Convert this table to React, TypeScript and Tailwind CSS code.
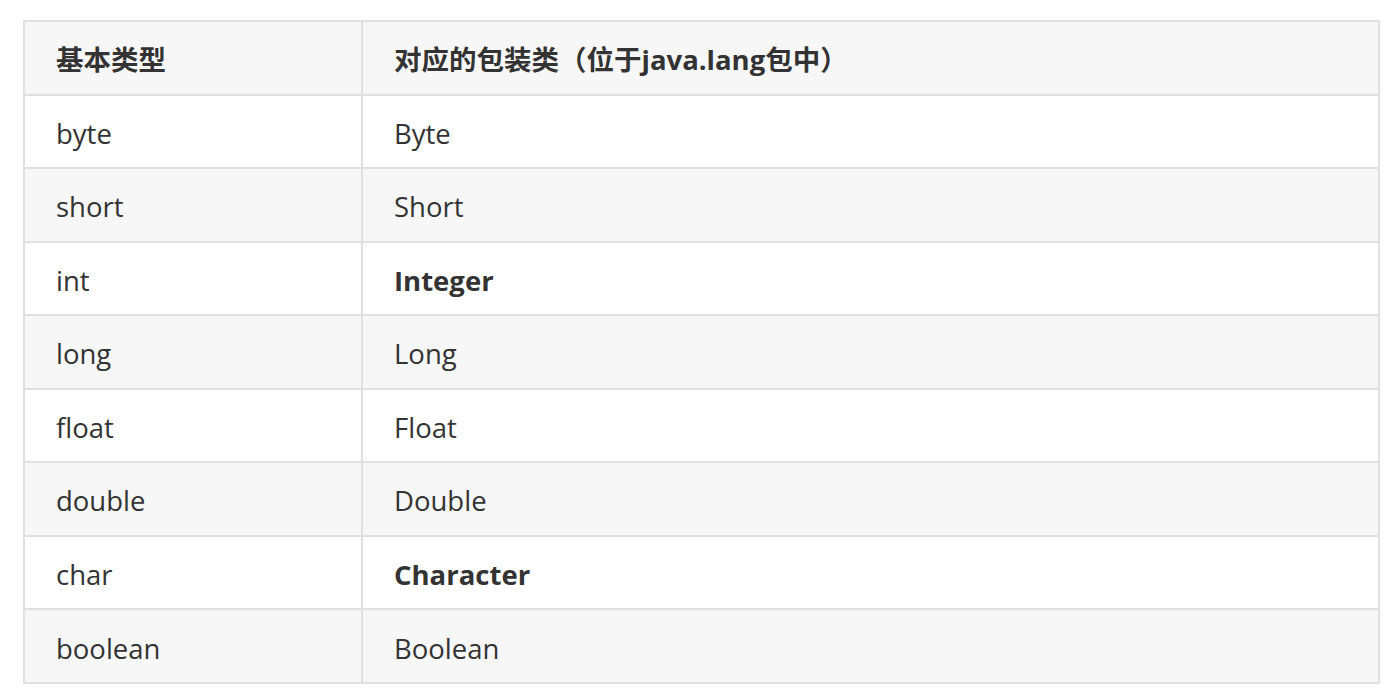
const rows: { basic: string; wrapper: string; bold?: boolean }[] = [
  { basic: "byte", wrapper: "Byte" },
  { basic: "short", wrapper: "Short" },
  { basic: "int", wrapper: "Integer", bold: true },
  { basic: "long", wrapper: "Long" },
  { basic: "float", wrapper: "Float" },
  { basic: "double", wrapper: "Double" },
  { basic: "char", wrapper: "Character", bold: true },
  { basic: "boolean", wrapper: "Boolean" },
];

export default function App() {
  return (
    <div
      className="min-h-screen bg-white pt-[20px] pl-[23px] text-[#333333]"
      style={{ fontFamily: '"Open Sans", "Noto Sans CJK SC", sans-serif' }}
    >
      <div className="w-[1357px] border-2 border-[#e0e0e0]">
        {/* header */}
        <div className="grid grid-cols-[338px_1fr] bg-[#f7f7f7] border-b-2 border-[#e0e0e0]">
          <div className="h-[71.55px] flex items-center pt-[3px] pl-[31px] border-r-2 border-[#e0e0e0] text-[27.5px] font-bold">
            基本类型
          </div>
          <div className="h-[71.55px] flex items-center pt-[3px] pl-[31px] text-[27.5px] font-bold">
            对应的包装类（位于java.lang包中）
          </div>
        </div>

        {rows.map((row, idx) => (
          <div
            key={row.basic}
            className={
              "grid grid-cols-[338px_1fr] " +
              (idx % 2 === 0 ? "bg-white" : "bg-[#f7f7f7]") +
              (idx < rows.length - 1 ? " border-b-2 border-[#e0e0e0]" : "")
            }
          >
            <div className="h-[71.55px] flex items-center pt-[4px] pl-[31px] border-r-2 border-[#e0e0e0] text-[27.5px]">
              {row.basic}
            </div>
            <div className={"h-[71.55px] flex items-center pt-[4px] pl-[31px] text-[27.5px]" + (row.bold ? " font-bold" : "")}>
              {row.wrapper}
            </div>
          </div>
        ))}
      </div>
    </div>
  );
}
